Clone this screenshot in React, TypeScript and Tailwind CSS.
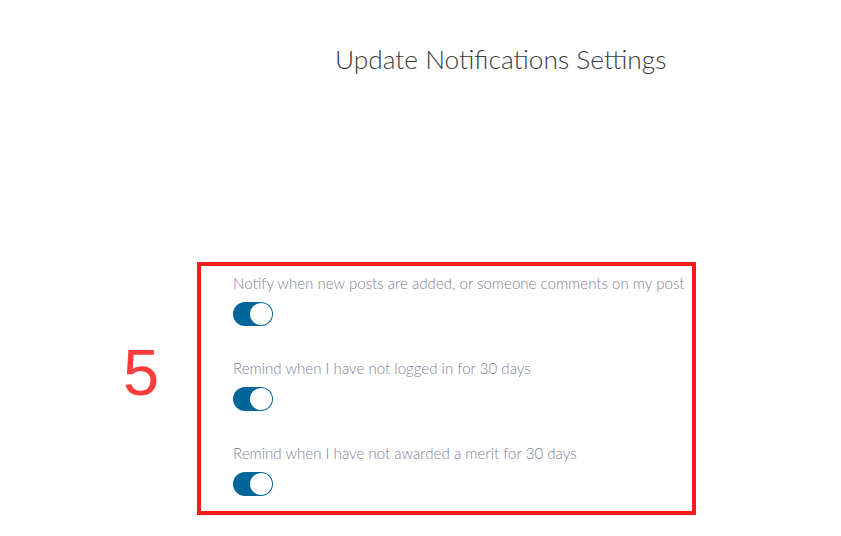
import React from "react";

const items = [
  "Notify when new posts are added, or someone comments on my post",
  "Remind when I have not logged in for 30 days",
  "Remind when I have not awarded a merit for 30 days",
];

function Toggle() {
  return (
    <div className="flex h-[24px] w-[40px] items-center justify-end rounded-full bg-[#03669b] p-[1px]">
      <div className="h-[22px] w-[22px] rounded-full bg-white" />
    </div>
  );
}

export default function App() {
  return (
    <div
      className="min-h-[536px] w-[841px] bg-white"
      style={{ fontFamily: "Lato, 'Open Sans', sans-serif" }}
    >
      <div className="pl-[335px] pt-[41px]">
        <h1 className="text-[26.3px] font-light leading-[36px] text-[#3a3a3a]">
          Update Notifications Settings
        </h1>
      </div>
      <div className="mt-[185px] flex items-start pl-[123px]">
        <div className="mt-[78px] w-[74px] text-[65px] leading-[65px] text-[#ff3b3b]" style={{ fontFamily: "'Liberation Sans', Arial, sans-serif" }}>
          5
        </div>
        <div className="flex w-[499px] flex-col gap-[32px] border-4 border-[#ff1a1a] pb-[15px] pl-[32px] pt-[7px]">
          {items.map((t) => (
            <div key={t} className="flex flex-col gap-[9px]">
              <div className="whitespace-nowrap text-[15.1px] font-light leading-[20px] text-[#80809a]">
                {t}
              </div>
              <Toggle />
            </div>
          ))}
        </div>
      </div>
    </div>
  );
}
